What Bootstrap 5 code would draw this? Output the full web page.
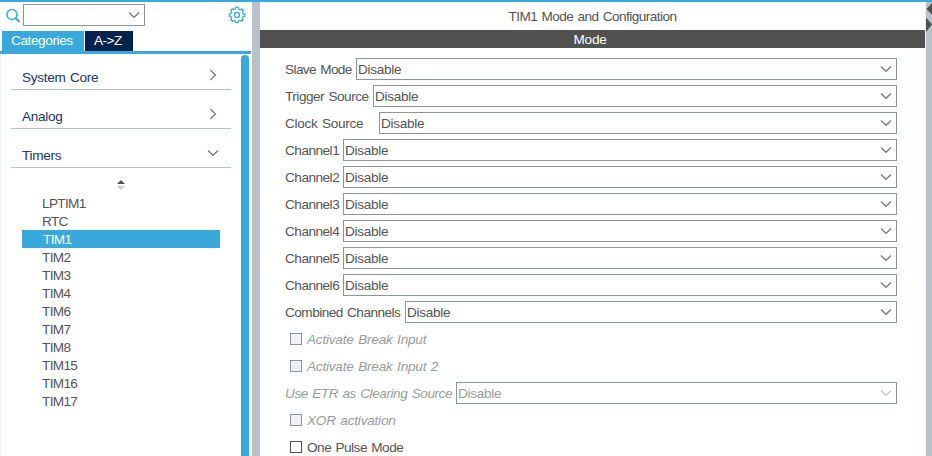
<!DOCTYPE html>
<html lang="en">
<head>
<meta charset="utf-8">
<title>TIM1 Mode and Configuration</title>
<link href="https://cdn.jsdelivr.net/npm/bootstrap@5.3.0/dist/css/bootstrap.min.css" rel="stylesheet">
<style>
body{font:13.6px/18px "Liberation Sans",Arial,sans-serif;color:#555;background:#fff;height:456px;letter-spacing:-.3px}
.app{height:456px;border-top:2px solid #39a9dc}
.side{width:252px}
.tools{height:29px;padding:2px 6px 0 5px}
.find{width:122px;height:22px;border:1px solid #8c959c;margin-left:3px;padding-right:4px}
.gear{margin-top:2px}
.tabs{height:20px;padding-left:2px;gap:1px}
.tab-item{height:20px;line-height:20px;color:#fff}
.tab-cat{width:82px;background:#39a9dc;letter-spacing:-.4px;padding-left:9px}
.tab-az{width:48px;background:#03234b;padding-left:9px;letter-spacing:-.5px}
.tab-rule{height:3px;background:#39a9dc;margin-right:1px}
.tree{border-left:1px solid #f0f0f0}
.cats{width:220px;margin-left:10px;padding-top:1px}
.cat{height:39px;padding:17px 12px 0 11px;border-bottom:1px solid #b7c3c9;color:#23336b;line-height:20px;word-spacing:1px}
.cat:first-child{height:35px;padding-top:13px}
.cat svg{margin:1px 2px 0 0}
.cat svg.opened{margin:3px 0 0}
.sorter{height:26px;padding:12px 1px 0 0}
.items{width:198px;margin-left:11px;letter-spacing:-.65px}
.item{height:18px;padding-left:20px;line-height:19px}
.item.on{background:#39a9dc;color:#fff;padding-left:21px}
.track{width:11px;background:linear-gradient(90deg,#39a9dc 8px,#f0f1f5 8px);margin-top:1px}
.thumb-cap{height:4px;background:#fff}
.thumb-cap i{display:block;width:8px;height:4px;border-radius:4px 4px 0 0;background:#39a9dc}
.split{width:8px;background:#b7c3c9}
.head{height:28px;line-height:29px;letter-spacing:-.55px;word-spacing:1px}
.mode{height:18px;line-height:19px;background:#505150;color:#fff;padding-right:5px}
.form{padding:10px 28px 0 25px}
.line{height:22px;margin-bottom:5px;line-height:23px}
.line .lab{white-space:nowrap;flex:none;word-spacing:1px}
.pick{height:22px;border:1px solid #8c959c;padding:0 4px 0 1px;line-height:21px;min-width:0}
.w-slave{width:71px;letter-spacing:-.6px}.w-trig{width:88px;letter-spacing:-.49px}.w-clock{width:94px;letter-spacing:-.3px}.w-ch{width:58px;letter-spacing:-.5px}.w-comb{width:120px;letter-spacing:-.52px}.w-etr{width:171px}
.pulse{letter-spacing:-.5px}
.off{color:#999b9d}
.off .lab{font-style:italic;letter-spacing:-.22px}
.off .w-etr{letter-spacing:-.44px}
.box{width:12px;height:12px;border:1px solid #505150;margin:0 5px}
.off .box{border-color:#8c959c;background:#f0f1f4}
.edge{width:7px;background:#b7c3c9;border-left:1px solid #f0f1f5}
svg{display:block;flex:none}
</style>
</head>
<body>
<svg width="0" height="0" class="d-none">
<symbol id="down" viewBox="0 0 12 8"><path d="M1 1.5 6 6.3 11 1.5" fill="none" stroke="currentColor" stroke-width="1.2"/></symbol>
<symbol id="next" viewBox="0 0 8 12"><path d="M1.3 1 6.5 6 1.3 11" fill="none" stroke="currentColor" stroke-width="1.2"/></symbol>
</svg>
<div class="app d-flex overflow-hidden">
<aside class="side d-flex flex-column flex-shrink-0">
<div class="tools d-flex align-items-start">
<svg width="15" height="15" viewBox="0 0 15 15" class="mt-1" fill="none" stroke="#39a9dc"><circle cx="7" cy="6.5" r="5" stroke-width="1.5"/><path d="m10.500 10 4 4" stroke-width="2"/></svg>
<div class="find d-flex align-items-center justify-content-end"><svg width="12" height="8" color="#777"><use href="#down"/></svg></div>
<svg width="18" height="18" viewBox="-9 -9 18 18" class="ms-auto gear" fill="none" stroke="#39a9dc" stroke-width="1.3"><path d="M-1.200-7.600H1.200L1.800-5.800 3.100-5.200 4.800-6 6.400-4.500 5.500-2.700 6-1.400 7.700-.9V1.200L6 1.800 5.400 3.100 6.100 4.800 4.600 6.300 2.900 5.500 1.600 6.100 1 7.700H-1.100L-1.700 6.100-3 5.500-4.700 6.200-6.200 4.700-5.400 3-6 1.700-7.600 1V-1L-6-1.700-5.400-3-6.200-4.700-4.700-6.200-3-5.400-1.700-6Z"/><circle r="2.500"/></svg>
</div>
<div class="tabs d-flex"><div class="tab-item tab-cat">Categories</div><div class="tab-item tab-az">A-&gt;Z</div></div>
<div class="tab-rule"></div>
<div class="tree d-flex flex-grow-1">
<div class="flex-grow-1">
<nav class="cats">
<div class="cat d-flex justify-content-between"><span>System Core</span><svg width="8" height="12" color="#777"><use href="#next"/></svg></div>
<div class="cat d-flex justify-content-between"><span>Analog</span><svg width="8" height="12" color="#777"><use href="#next"/></svg></div>
<div class="cat d-flex justify-content-between"><span>Timers</span><svg class="opened" width="12" height="8" color="#777"><use href="#down"/></svg></div>
<div class="sorter d-flex justify-content-center"><svg width="8" height="10" viewBox="0 0 8 10"><path d="M0 4 4 0 8 4Z" fill="#505150"/><path d="M0 6 4 10 8 6Z" fill="#c8c8c8"/></svg></div>
<div class="items">
<div class="item">LPTIM1</div><div class="item">RTC</div><div class="item on">TIM1</div><div class="item">TIM2</div><div class="item">TIM3</div><div class="item">TIM4</div><div class="item">TIM6</div><div class="item">TIM7</div><div class="item">TIM8</div><div class="item">TIM15</div><div class="item">TIM16</div><div class="item">TIM17</div>
</div>
</nav>
</div>
<div class="track"><div class="thumb-cap"><i></i></div></div>
</div>
</aside>
<div class="split flex-shrink-0"></div>
<main class="flex-grow-1">
<div class="head text-center"><span>TIM1 Mode and Configuration</span></div>
<div class="mode text-center">Mode</div>
<div class="form">
<div class="line d-flex"><span class="lab w-slave">Slave Mode</span><div class="pick flex-grow-1 d-flex align-items-center justify-content-between"><span>Disable</span><svg width="12" height="8" color="#777"><use href="#down"/></svg></div></div>
<div class="line d-flex"><span class="lab w-trig">Trigger Source</span><div class="pick flex-grow-1 d-flex align-items-center justify-content-between"><span>Disable</span><svg width="12" height="8" color="#777"><use href="#down"/></svg></div></div>
<div class="line d-flex"><span class="lab w-clock">Clock Source</span><div class="pick flex-grow-1 d-flex align-items-center justify-content-between"><span>Disable</span><svg width="12" height="8" color="#777"><use href="#down"/></svg></div></div>
<div class="line d-flex"><span class="lab w-ch">Channel1</span><div class="pick flex-grow-1 d-flex align-items-center justify-content-between"><span>Disable</span><svg width="12" height="8" color="#777"><use href="#down"/></svg></div></div>
<div class="line d-flex"><span class="lab w-ch">Channel2</span><div class="pick flex-grow-1 d-flex align-items-center justify-content-between"><span>Disable</span><svg width="12" height="8" color="#777"><use href="#down"/></svg></div></div>
<div class="line d-flex"><span class="lab w-ch">Channel3</span><div class="pick flex-grow-1 d-flex align-items-center justify-content-between"><span>Disable</span><svg width="12" height="8" color="#777"><use href="#down"/></svg></div></div>
<div class="line d-flex"><span class="lab w-ch">Channel4</span><div class="pick flex-grow-1 d-flex align-items-center justify-content-between"><span>Disable</span><svg width="12" height="8" color="#777"><use href="#down"/></svg></div></div>
<div class="line d-flex"><span class="lab w-ch">Channel5</span><div class="pick flex-grow-1 d-flex align-items-center justify-content-between"><span>Disable</span><svg width="12" height="8" color="#777"><use href="#down"/></svg></div></div>
<div class="line d-flex"><span class="lab w-ch">Channel6</span><div class="pick flex-grow-1 d-flex align-items-center justify-content-between"><span>Disable</span><svg width="12" height="8" color="#777"><use href="#down"/></svg></div></div>
<div class="line d-flex"><span class="lab w-comb">Combined Channels</span><div class="pick flex-grow-1 d-flex align-items-center justify-content-between"><span>Disable</span><svg width="12" height="8" color="#777"><use href="#down"/></svg></div></div>
<div class="line off d-flex align-items-center"><span class="box"></span><span class="lab">Activate Break Input</span></div>
<div class="line off d-flex align-items-center"><span class="box"></span><span class="lab">Activate Break Input 2</span></div>
<div class="line off d-flex"><span class="lab w-etr">Use ETR as Clearing Source</span><div class="pick flex-grow-1 d-flex align-items-center justify-content-between"><span>Disable</span><svg width="12" height="8" color="#c8c8c8"><use href="#down"/></svg></div></div>
<div class="line off d-flex align-items-center"><span class="box"></span><span class="lab">XOR activation</span></div>
<div class="line d-flex align-items-center"><span class="box"></span><span class="lab pulse">One Pulse Mode</span></div>
</div>
</main>
<div class="edge flex-shrink-0"><svg width="6" height="32" viewBox="0 0 6 32" fill="#505150"><path d="M6 1V13L0.500 7ZM0 15.500 6 22.500 0 30Z"/></svg></div>
</div>
<script src="https://cdn.jsdelivr.net/npm/bootstrap@5.3.0/dist/js/bootstrap.bundle.min.js"></script>
</body>
</html>
